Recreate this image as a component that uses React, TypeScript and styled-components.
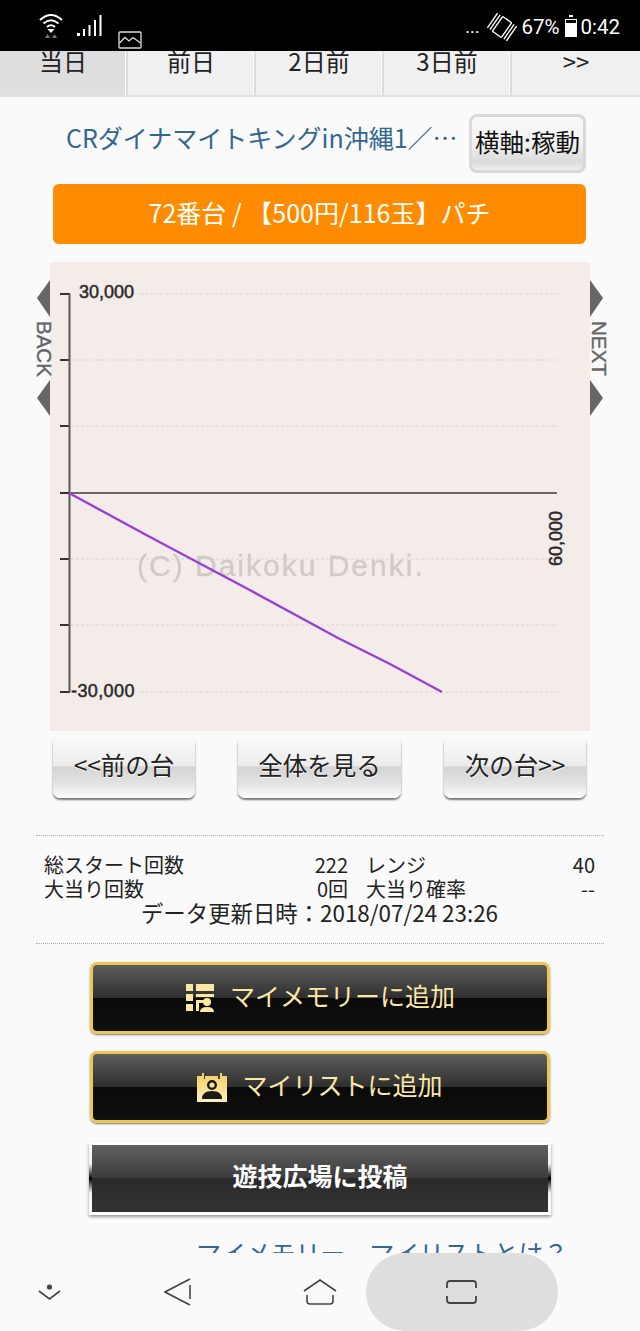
import styled, { createGlobalStyle } from "styled-components";

const GlobalStyle = createGlobalStyle`
    html, body {
        margin: 0;
        padding: 0;
        background: #fafafa;
    }
    * {
        box-sizing: border-box;
    }
`;

const FONT = `"Noto Sans CJK JP", "Noto Sans", sans-serif`;
const GOLD = "#fbe8a4";

const Screen = styled.div`
    width: 640px;
    height: 1331px;
    display: flex;
    flex-direction: column;
    overflow: hidden;
    font-family: ${FONT};
    background: #fafafa;
`;

const StatusBar = styled.header`
    height: 51px;
    flex: none;
    background: #000;
    color: #fff;
    display: flex;
    justify-content: space-between;
    padding: 13px 20px 2px 38px;
`;

const StatusLeft = styled.div`
    display: flex;
    gap: 13px;
    align-items: flex-start;
`;

const SignalIcon = styled.svg`
    margin-top: 2px;
`;

const PictureIcon = styled.svg`
    align-self: flex-end;
    margin-left: 3px;
`;

const StatusRight = styled.div`
    display: flex;
    align-items: flex-start;
`;

const StatusDots = styled.span`
    font-size: 18px;
    line-height: 28px;
    margin-right: 8px;
    font-family: "Roboto", sans-serif;
`;

const StatusText = styled.span`
    font-family: "Roboto", sans-serif;
    font-size: 20.5px;
    line-height: 28px;
`;

const BatteryIcon = styled.svg`
    margin: 2px 3px 0 6px;
`;

const RotateIcon = styled.svg`
    margin-right: 4px;
`;

const Main = styled.main`
    flex: 1;
    min-height: 0;
    overflow: hidden;
`;

const Tabs = styled.nav`
    display: flex;
    height: 46px;
    overflow: hidden;
    border-bottom: 2px solid #e0e0e0;
`;

const Tab = styled.div<{ $active?: boolean }>`
    width: 128px;
    height: 44px;
    background: ${(p) => (p.$active ? "#dedede" : "#f0f0f0")};
    border-right: 2px solid #dcdcdc;
    box-shadow: inset -1px 0 0 #fff;
    color: #222;
    font-size: 24px;
    line-height: 20px;
    text-align: center;

    &:last-child {
        border-right: none;
        box-shadow: none;
    }
`;

const TitleRow = styled.section`
    display: flex;
    align-items: center;
    margin-top: 17px;
    padding: 0 54px 0 66px;
    gap: 13px;
`;

const Title = styled.a`
    flex: 1;
    color: #336791;
    font-size: 25px;
    margin-bottom: 14px;
    white-space: nowrap;
    overflow: hidden;
`;

const AxisButton = styled.button`
    width: 117px;
    height: 59px;
    padding: 0 0 5px;
    border: 3px solid #d8d8d8;
    border-radius: 8px;
    background: linear-gradient(#f8f8f8 0%, #f2f2f2 50%, #dadada 85%, #efefef 100%);
    color: #111;
    font-family: ${FONT};
    font-size: 24.5px;
    white-space: nowrap;
`;

const MachineBar = styled.div`
    margin: 11px 54px 0 53px;
    height: 60px;
    padding-bottom: 5px;
    background: #ff8c00;
    border-radius: 6px;
    color: #fff;
    font-size: 25px;
    display: flex;
    align-items: center;
    justify-content: center;
`;

const ChartFrame = styled.section`
    position: relative;
    width: 540px;
    height: 469px;
    margin: 18px 0 0 50px;
    background: #f4ece8;
`;

const ChartSvg = styled.svg`
    display: block;
`;

const Watermark = styled.text`
    font-family: "Liberation Sans", sans-serif;
    font-size: 30px;
    letter-spacing: 2px;
    fill: #d0cbc8;
    stroke: #d0cbc8;
    stroke-width: 0.4;
    filter: blur(0.6px);
`;

const PagerTab = styled.div<{ $side: "left" | "right" }>`
    position: absolute;
    top: 18px;
    ${(p) => (p.$side === "left" ? "left: -15px;" : "right: -15px;")}
    width: 15px;
    display: flex;
    flex-direction: column;
    align-items: ${(p) => (p.$side === "left" ? "flex-end" : "flex-start")};
    color: #666;
`;

const PagerLabel = styled.span`
    position: relative;
    left: 2px;
    writing-mode: vertical-rl;
    font-family: "Liberation Sans", sans-serif;
    font-size: 20.5px;
    line-height: 15px;
    height: 63px;
    text-align: center;
    -webkit-text-stroke: 0.4px #666;
`;

const NavRow = styled.div`
    display: flex;
    justify-content: space-between;
    margin: 5px 54px 0 53px;
`;

const NavButton = styled.button<{ $wide?: boolean }>`
    width: ${(p) => (p.$wide ? "163px" : "142px")};
    height: 62px;
    padding: 0 0 5px;
    border: none;
    border-radius: 7px;
    background: linear-gradient(#fbfbfb 0%, #ececec 48%, #d4d4d4 50%, #e4e4e4 78%, #fdfdfd 100%);
    box-shadow: 0 2px 2px #777;
    color: #222;
    font-family: ${FONT};
    font-size: 24.5px;
    text-shadow: 0 1px 1px #fff;
    white-space: nowrap;
`;

const Stats = styled.section`
    margin: 37px 36px 0;
    padding: 17px 9px 18px 8px;
    border-top: 1px dotted #aaa;
    border-bottom: 1px dotted #aaa;
    color: #222;
`;

const StatsGrid = styled.div`
    display: grid;
    grid-template-columns: 240px 64px 1fr 60px;
    font-size: 20px;
    line-height: 24px;
`;

const StatLabel = styled.span<{ $second?: boolean }>`
    padding-left: ${(p) => (p.$second ? "18px" : "0")};
    white-space: nowrap;
`;

const StatValue = styled.span`
    text-align: right;
`;

const UpdatedAt = styled.div`
    margin-top: -2px;
    text-align: center;
    font-size: 22.4px;
    line-height: 26px;
    white-space: nowrap;
`;

const Actions = styled.section`
    display: flex;
    flex-direction: column;
    align-items: center;
    margin-top: 18px;
    gap: 17px;
`;

const GoldButton = styled.button`
    width: 460px;
    height: 72px;
    padding: 0 0 6px;
    border: 3px solid #eec654;
    border-radius: 7px;
    background: linear-gradient(#5e5e5e 0%, #2e2e2e 50%, #0a0a0a 50%, #101010 100%);
    box-shadow: 0 1px 2px #777;
    color: ${GOLD};
    font-family: ${FONT};
    font-size: 25px;
    display: flex;
    align-items: center;
    justify-content: center;
    gap: 15px;

    & > svg {
        margin-top: 6px;
    }
`;

const PostButton = styled.button`
    width: 462px;
    height: 73px;
    margin-top: 2px;
    padding: 0 0 8px;
    border: 3px solid #fff;
    border-image: linear-gradient(#fff 0%, #f4f4f4 30%, #000 50%, #f4f4f4 70%, #fff 100%) 3;
    background: linear-gradient(#606060 0%, #3c3c3c 50%, #2a2a2a 50%, #333 100%);
    box-shadow: 0 2px 3px #999;
    color: #fff;
    font-family: ${FONT};
    font-size: 25px;
    font-weight: 700;
`;

const HelpLink = styled.a`
    display: block;
    margin-top: 19px;
    text-align: right;
    padding-right: 72px;
    color: #336791;
    font-size: 24.8px;
    line-height: 36px;
    white-space: nowrap;
`;

const NavBar = styled.footer`
    height: 78px;
    flex: none;
    background: #fafafa;
    display: flex;
    align-items: center;
    padding-left: 38px;
`;

const BackIcon = styled.svg`
    margin-left: 103px;
`;

const HomeIcon = styled.svg`
    margin-left: 112px;
`;

const RecentPill = styled.div`
    width: 192px;
    height: 78px;
    margin-left: 29px;
    border-radius: 39px;
    background: #dedede;
    display: flex;
    align-items: center;
    justify-content: center;
    padding-right: 1px;
`;

const gridY = [32, 98, 164, 297, 363, 430];
const tickY = [32, 98, 164, 231, 297, 363, 430];
const tabs = ["当日", "前日", "2日前", "3日前", ">>"];

const WifiGlyph = () => (
    <svg width="26" height="26" viewBox="0 0 26 26" fill="none" stroke="#fff" strokeWidth="2">
        <path d="M2 7 Q13 -3 24 7" />
        <path d="M5.5 10.5 Q13 4 20.5 10.5" />
        <path d="M9 14 Q13 10.5 17 14" />
        <path d="M9.5 16 L16.5 16 L13 20 Z" fill="#fff" stroke="none" />
        <path d="M7 25 L9.5 21 L12 25 Z" fill="#777" stroke="none" />
        <path d="M14 25 L16.5 21 L19 25 Z" fill="#777" stroke="none" />
    </svg>
);

const ChartDrawing = () => (
    <ChartSvg width="540" height="469" viewBox="0 0 540 469">
        {gridY.map((y) => (
            <line key={y} x1={y === 32 || y === 430 ? 90 : 21} x2="507" y1={y} y2={y} stroke="#e2dcd8" strokeWidth="1.5" strokeDasharray="3 2" />
        ))}
        {tickY.map((y) => (
            <line key={y} x1="10" x2="20" y1={y} y2={y} stroke="#333" strokeWidth="2" />
        ))}
        <line x1="19.5" x2="19.5" y1="32" y2="430" stroke="#5c5654" strokeWidth="2" />
        <line x1="19" x2="507" y1="231" y2="231" stroke="#6e6664" strokeWidth="2" />
        <text x="29" y="36" fontFamily="Liberation Sans" fontSize="18" fill="#2a2a2a" stroke="#2a2a2a" strokeWidth="0.5">30,000</text>
        <text x="21" y="435" fontFamily="Liberation Sans" fontSize="18" letterSpacing="0.4" fill="#2a2a2a" stroke="#2a2a2a" strokeWidth="0.5">-30,000</text>
        <text transform="translate(512 304) rotate(-90)" fontFamily="Liberation Sans" fontSize="18" fill="#2a2a2a" stroke="#2a2a2a" strokeWidth="0.5">60,000</text>
        <Watermark x="87" y="314">(C) Daikoku Denki.</Watermark>
        <path d="M19 231 L100 275 L196 326 L288 376 L340 402 L392 430" fill="none" stroke="#9a3fd6" strokeWidth="2.4" />
    </ChartSvg>
);

const MemoryIcon = () => (
    <svg width="30" height="29" viewBox="0 0 30 29" fill={GOLD}>
        <rect x="1" y="0" width="7" height="7" />
        <rect x="11" y="0" width="18" height="7" />
        <rect x="1" y="10" width="7" height="7" />
        <rect x="11" y="10" width="18" height="3" />
        <rect x="1" y="20" width="7" height="7" />
        <path d="M11 16 H19 V19 H14 V27 H11 Z" />
        <circle cx="22" cy="18" r="4" />
        <path d="M15 28 Q15 23 22 23 Q29 23 29 28 Z" />
    </svg>
);

const ListIcon = () => (
    <svg width="30" height="29" viewBox="0 0 30 29">
        <defs>
            <linearGradient id="listGold" x1="0" x2="0" y1="0" y2="1">
                <stop offset="0" stopColor="#f5cf62" />
                <stop offset="1" stopColor="#fdf0bb" />
            </linearGradient>
        </defs>
        <path d="M0 3 H5 V0 H7 V6 H8 V3 H21 V6 H23 V0 H25 V3 H30 V29 H0 Z" fill="url(#listGold)" />
        <circle cx="15" cy="12" r="5" fill="#1a1a1a" />
        <circle cx="15" cy="12" r="2.6" fill="#f8e09a" />
        <path d="M5 26 Q5 18 15 18 Q25 18 25 26 Z" fill="#1a1a1a" />
    </svg>
);

export default function App() {
    return (
        <Screen>
            <GlobalStyle />
            <StatusBar>
                <StatusLeft>
                    <WifiGlyph />
                    <SignalIcon width="25" height="22" viewBox="0 0 25 22" fill="#fff">
                        <rect x="0" y="18" width="3" height="3" />
                        <rect x="6" y="14" width="2" height="7" />
                        <rect x="11.5" y="10" width="2" height="11" />
                        <rect x="17" y="5" width="2" height="16" />
                        <rect x="22.5" y="0" width="2" height="21" />
                    </SignalIcon>
                    <PictureIcon width="24" height="18" viewBox="0 0 24 18" fill="none" stroke="#ddd" strokeWidth="1.3">
                        <rect x="1" y="1" width="22" height="16" rx="1" />
                        <path d="M1.5 12 L7 6.5 L11 10 L15 6.5 L22.5 12" />
                    </PictureIcon>
                </StatusLeft>
                <StatusRight>
                    <StatusDots>...</StatusDots>
                    <RotateIcon width="30" height="28" viewBox="0 0 30 28" fill="none" stroke="#fff" strokeWidth="1.4">
                        <rect x="9.5" y="5" width="11" height="18" rx="1" transform="rotate(35 15 14)" />
                        <path d="M13.1 1.8 L2.9 16.6" />
                        <path d="M10.6 0.1 L0.4 14.9" />
                        <path d="M27.1 11.4 L16.9 26.2" />
                        <path d="M29.6 13.1 L19.4 27.9" />
                    </RotateIcon>
                    <StatusText>67%</StatusText>
                    <BatteryIcon width="12" height="22" viewBox="0 0 12 22" fill="#fff">
                        <rect x="4" y="0" width="4" height="2" />
                        <path d="M0 4 H12 V22 H0 Z M1 5 V8 H11 V5 Z" fillRule="evenodd" />
                    </BatteryIcon>
                    <StatusText>0:42</StatusText>
                </StatusRight>
            </StatusBar>
            <Main>
                <Tabs>
                    {tabs.map((label, i) => (
                        <Tab key={label} $active={i === 0}>{label}</Tab>
                    ))}
                </Tabs>
                <TitleRow>
                    <Title>CRダイナマイトキングin沖縄1／…</Title>
                    <AxisButton>横軸:稼動</AxisButton>
                </TitleRow>
                <MachineBar>72番台 / 【500円/116玉】パチ</MachineBar>
                <ChartFrame>
                    <ChartDrawing />
                    <PagerTab $side="left">
                        <svg width="13" height="37" viewBox="0 0 13 37" fill="#666"><path d="M13 0 V37 L0 18 Z" /></svg>
                        <PagerLabel>BACK</PagerLabel>
                        <svg width="13" height="36" viewBox="0 0 13 36" fill="#666"><path d="M13 0 V36 L0 18 Z" /></svg>
                    </PagerTab>
                    <PagerTab $side="right">
                        <svg width="13" height="37" viewBox="0 0 13 37" fill="#666"><path d="M0 0 V37 L13 18 Z" /></svg>
                        <PagerLabel>NEXT</PagerLabel>
                        <svg width="13" height="36" viewBox="0 0 13 36" fill="#666"><path d="M0 0 V36 L13 18 Z" /></svg>
                    </PagerTab>
                </ChartFrame>
                <NavRow>
                    <NavButton>&lt;&lt;前の台</NavButton>
                    <NavButton $wide>全体を見る</NavButton>
                    <NavButton>次の台&gt;&gt;</NavButton>
                </NavRow>
                <Stats>
                    <StatsGrid>
                        <StatLabel>総スタート回数</StatLabel>
                        <StatValue>222</StatValue>
                        <StatLabel $second>レンジ</StatLabel>
                        <StatValue>40</StatValue>
                        <StatLabel>大当り回数</StatLabel>
                        <StatValue>0回</StatValue>
                        <StatLabel $second>大当り確率</StatLabel>
                        <StatValue>--</StatValue>
                    </StatsGrid>
                    <UpdatedAt>データ更新日時：2018/07/24 23:26</UpdatedAt>
                </Stats>
                <Actions>
                    <GoldButton><MemoryIcon />マイメモリーに追加</GoldButton>
                    <GoldButton><ListIcon />マイリストに追加</GoldButton>
                    <PostButton>遊技広場に投稿</PostButton>
                </Actions>
                <HelpLink>マイメモリー、マイリストとは？</HelpLink>
            </Main>
            <NavBar>
                <svg width="23" height="16" viewBox="0 0 23 16" fill="none" stroke="#444" strokeWidth="1.6">
                    <circle cx="11.5" cy="3" r="2.6" fill="#444" stroke="none" />
                    <path d="M1 7 L11.5 15 L22 7" />
                </svg>
                <BackIcon width="27" height="28" viewBox="0 0 27 28" fill="none" stroke="#444" strokeWidth="1.6">
                    <path d="M26 1 L1 14 L26 27" />
                    <path d="M26 7 V21" />
                </BackIcon>
                <HomeIcon width="34" height="26" viewBox="0 0 34 26" fill="none" stroke="#444" strokeWidth="1.6">
                    <path d="M1 12 L17 1 L33 12" />
                    <path d="M4 16 V22 Q4 25 7 25 H27 Q30 25 30 22 V16" />
                </HomeIcon>
                <RecentPill>
                    <svg width="31" height="24" viewBox="0 0 31 24" fill="none" stroke="#444" strokeWidth="1.8">
                        <path d="M1 8 V4 Q1 1 4 1 H27 Q30 1 30 4 V8" />
                        <path d="M1 16 V20 Q1 23 4 23 H27 Q30 23 30 20 V16" />
                    </svg>
                </RecentPill>
            </NavBar>
        </Screen>
    );
}
